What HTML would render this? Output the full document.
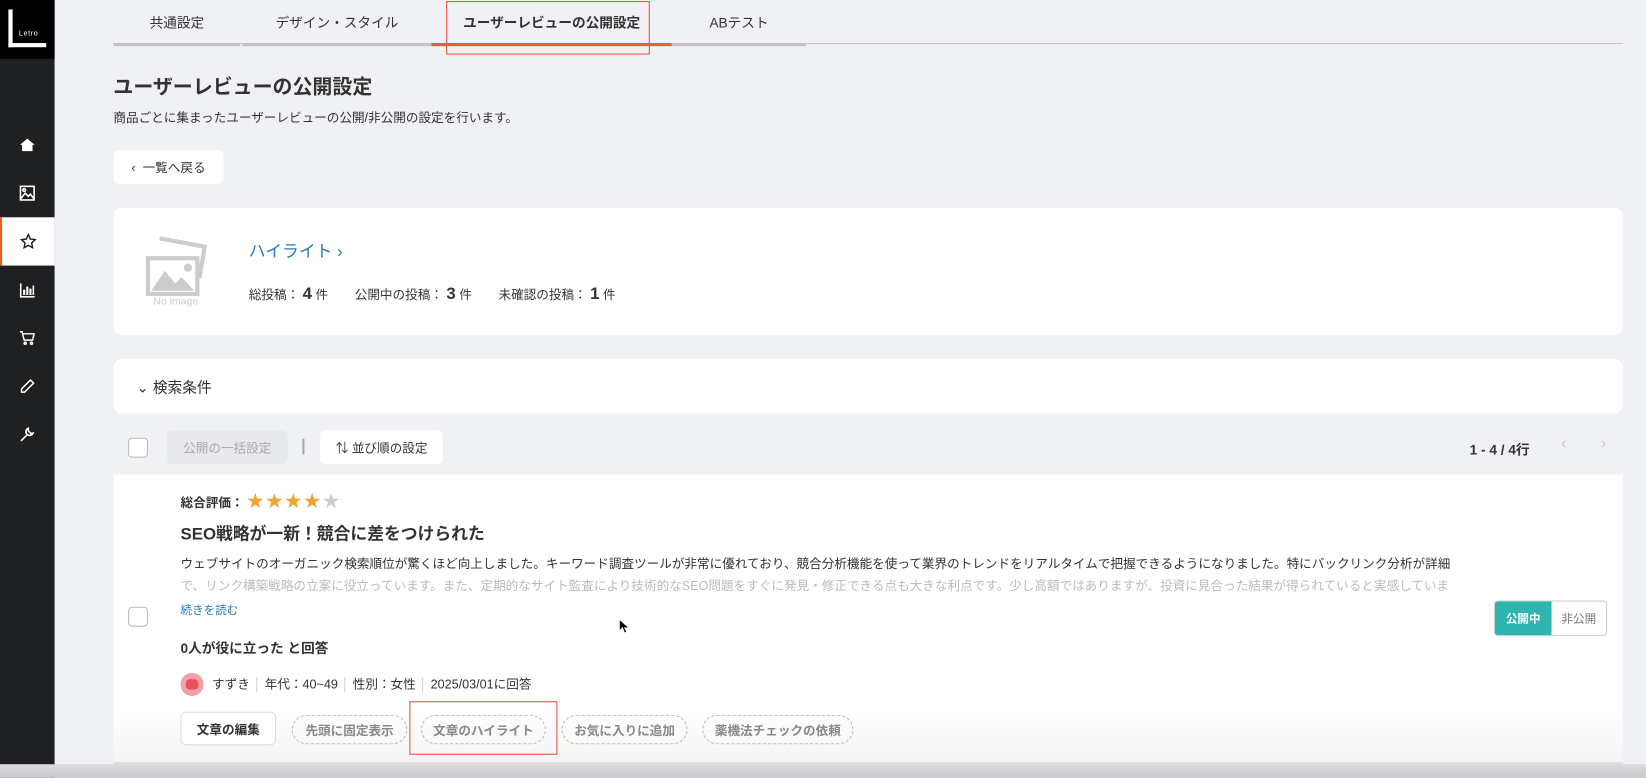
<!DOCTYPE html>
<html><head><meta charset="utf-8"><style>
*{box-sizing:border-box;margin:0;padding:0}
html,body{width:1646px;height:778px;overflow:hidden;background:#f0f1f4}
#w{position:absolute;left:0;top:0;width:1568px;height:741px;transform:scale(1.04974);transform-origin:0 0;font-family:"Liberation Sans","Noto Sans CJK JP",sans-serif;color:#333}
.sb{position:absolute;left:0;top:0;width:52px;height:741px;background:#1f2022}
.logo{position:absolute;left:0;top:0;width:52px;height:56px;background:#000}
.ic{position:absolute;left:0;width:52px;height:46px;display:flex;align-items:center;justify-content:center}
.abs{position:absolute}
.tab{position:absolute;top:0;height:44px;font-size:13px;display:flex;align-items:center;justify-content:center;border-bottom:3px solid #c4c4c6;color:#333}
.card{position:absolute;background:#fff;border-radius:8px}
.btn{position:absolute;background:#fff;border-radius:5px;font-size:12px;display:flex;align-items:center;justify-content:center}
.pill{position:absolute;top:681px;height:28px;border:1px dashed #bbb;border-radius:14px;font-size:12px;color:#888;display:flex;align-items:center;justify-content:center;font-weight:bold}
.star{color:#f0a232;font-size:16px;letter-spacing:2px}
</style></head><body><div id="w">
<div class="sb">
<div class="logo"><div class="abs" style="left:8px;top:9px;width:4px;height:36px;background:#fff"></div><div class="abs" style="left:8px;top:41px;width:36px;height:4px;background:#fff"></div><div class="abs" style="left:18px;top:29px;color:#fff;font-size:7px;letter-spacing:.5px">Letro</div></div>
<div class="ic" style="top:115px"><svg width="16" height="16" viewBox="0 0 16 16"><path d="M1 8L8 2l7 6h-2v6H3V8z" fill="#fff"/></svg></div>
<div class="ic" style="top:161px"><svg width="16" height="16" viewBox="0 0 16 16" fill="none" stroke="#fff" stroke-width="1.5"><rect x="1.5" y="1.5" width="13" height="13"/><path d="M2 13l4-5 3 3 2-2 3 4"/><circle cx="5" cy="5" r="1.3"/></svg></div>
<div class="ic" style="top:207px;background:#fff;border-left:2px solid #e8631c"><svg width="16" height="16" viewBox="0 0 16 16" fill="none" stroke="#222" stroke-width="1.4"><path d="M8 1.5l2 4.2 4.5.6-3.3 3.1.8 4.5L8 11.7l-4 2.2.8-4.5L1.5 6.3 6 5.7z"/></svg></div>
<div class="ic" style="top:253px"><svg width="16" height="16" viewBox="0 0 16 16" fill="#fff"><rect x="1" y="14" width="14" height="1.5"/><rect x="1" y="2" width="1.5" height="13"/><rect x="4" y="8" width="2" height="5"/><rect x="7" y="5" width="2" height="8"/><rect x="10" y="7" width="2" height="6"/><rect x="13" y="4" width="1.5" height="9"/></svg></div>
<div class="ic" style="top:299px"><svg width="16" height="16" viewBox="0 0 16 16" fill="none" stroke="#fff" stroke-width="1.4"><path d="M1 2h2l2 8h8l1.5-6H4"/><circle cx="6" cy="13" r="1"/><circle cx="12" cy="13" r="1"/></svg></div>
<div class="ic" style="top:345px"><svg width="16" height="16" viewBox="0 0 16 16" fill="none" stroke="#fff" stroke-width="1.4"><path d="M11 2l3 3-8.5 8.5H2.5v-3z"/></svg></div>
<div class="ic" style="top:391px"><svg width="16" height="16" viewBox="0 0 16 16" fill="none" stroke="#fff" stroke-width="1.5"><path d="M2 14l6-6M9 2a3.5 3.5 0 104.5 4.5L11.5 7 9 4.5z"/></svg></div>
</div>

<div class="abs" style="left:108px;top:41px;width:1438px;height:1px;background:#c4c4c6"></div>
<div class="tab" style="left:108px;width:121px">共通設定</div>
<div class="tab" style="left:231px;width:180px">デザイン・スタイル</div>
<div class="tab" style="left:411px;width:229px;border-bottom-color:#e8631c;font-weight:bold">ユーザーレビューの公開設定</div>
<div class="tab" style="left:640px;width:128px">ABテスト</div>
<div class="abs" style="left:425px;top:1px;width:194px;height:51px;border:1px solid #e8503a"></div>

<div class="abs" style="left:108px;top:68px;font-size:19px;font-weight:bold">ユーザーレビューの公開設定</div>
<div class="abs" style="left:108px;top:103px;font-size:12px">商品ごとに集まったユーザーレビューの公開/非公開の設定を行います。</div>
<div class="btn" style="left:108px;top:143px;width:105px;height:32px">‹&nbsp; 一覧へ戻る</div>

<div class="card" style="left:108px;top:198px;width:1438px;height:121px">
<svg class="abs" style="left:30px;top:24px" width="62" height="72" viewBox="0 0 62 72"><path d="M14 5l43 8-5 30" fill="none" stroke="#ccc" stroke-width="4"/><rect x="3" y="24" width="47" height="34" fill="#fff" stroke="#ccc" stroke-width="4"/><path d="M6 55l13-19 10 12 6-6 12 13z" fill="#ccc"/><circle cx="41" cy="33" r="4" fill="#ccc"/><text x="8" y="68" font-size="10" fill="#ccc" font-family="Liberation Sans">No image</text></svg>
<div class="abs" style="left:129px;top:28px;color:#2a7ab8;font-size:16px">ハイライト ›</div>
<div class="abs" style="left:129px;top:74px;font-size:12px;white-space:nowrap">総投稿： <b style="font-size:16px">4</b> 件 <span style="margin-left:22px">公開中の投稿： <b style="font-size:16px">3</b> 件</span> <span style="margin-left:22px">未確認の投稿： <b style="font-size:16px">1</b> 件</span></div>
</div>

<div class="card" style="left:108px;top:342px;width:1438px;height:52px"><div class="abs" style="left:22px;top:17px;font-size:14px">⌄ 検索条件</div></div>

<div class="abs" style="left:122px;top:417px;width:19px;height:19px;border:1px solid #bbb;border-radius:4px;background:#fff"></div>
<div class="btn" style="left:159px;top:410px;width:115px;height:32px;background:#e8e9ec;color:#aaa">公開の一括設定</div>
<div class="abs" style="left:288px;top:418px;width:2px;height:15px;background:#aaa"></div>
<div class="btn" style="left:305px;top:410px;width:117px;height:32px">⇅ 並び順の設定</div>
<div class="abs" style="left:1400px;top:418px;font-size:13px;font-weight:bold">1 - 4 / 4行</div>
<div class="abs" style="left:1487px;top:414px;color:#ccc;font-size:16px">‹</div>
<div class="abs" style="left:1525px;top:414px;color:#ccc;font-size:16px">›</div>

<div class="abs" style="left:108px;top:452px;width:1438px;height:280px;background:linear-gradient(#fff 80%,#f2f2f3)"></div>
<div class="abs" style="left:108px;top:726px;width:1438px;height:2px;background:#ddd"></div>
<div class="abs" style="left:0;top:728px;width:1568px;height:13px;background:linear-gradient(#dcdcde,#c8c8ca)"></div>
<div class="abs" style="left:122px;top:578px;width:19px;height:19px;border:1px solid #bbb;border-radius:4px;background:#fff"></div>
<div class="abs" style="left:172px;top:464px;font-size:12px;font-weight:bold">総合評価： <span class="star">★★★★</span><span style="color:#ccc;font-size:16px">★</span></div>
<div class="abs" style="left:172px;top:495px;font-size:16px;font-weight:bold">SEO戦略が一新！競合に差をつけられた</div>
<div class="abs" style="left:172px;top:527px;font-size:12px;width:1210px;white-space:nowrap;overflow:hidden;line-height:21px">ウェブサイトのオーガニック検索順位が驚くほど向上しました。キーワード調査ツールが非常に優れており、競合分析機能を使って業界のトレンドをリアルタイムで把握できるようになりました。特にバックリンク分析が詳細<br><span style="color:#bbb">で、リンク構築戦略の立案に役立っています。また、定期的なサイト監査により技術的なSEO問題をすぐに発見・修正できる点も大きな利点です。少し高額ではありますが、投資に見合った結果が得られていると実感していま</span></div>
<div class="abs" style="left:172px;top:573px;font-size:11px;color:#2a7ab8">続きを読む</div>
<div class="abs" style="left:172px;top:607px;font-size:13px;font-weight:bold">0人が役に立った と回答</div>
<div class="abs" style="left:172px;top:641px;width:22px;height:22px;border-radius:50%;background:#f4a0a6"><div class="abs" style="left:5px;top:6px;width:12px;height:10px;border-radius:4px;background:#e5505c"></div></div>
<div class="abs" style="left:202px;top:643px;font-size:12px;white-space:nowrap">すずき <span style="color:#ccc">│</span> 年代：40~49 <span style="color:#ccc">│</span> 性別：女性 <span style="color:#ccc">│</span> 2025/03/01に回答</div>
<div class="btn" style="left:172px;top:678px;width:91px;height:32px;border:1px solid #ddd;font-weight:bold">文章の編集</div>
<div class="pill" style="left:278px;width:110px">先頭に固定表示</div>
<div class="pill" style="left:401px;width:119px">文章のハイライト</div>
<div class="pill" style="left:535px;width:120px">お気に入りに追加</div>
<div class="pill" style="left:669px;width:144px">薬機法チェックの依頼</div>
<div class="abs" style="left:390px;top:668px;width:141px;height:51px;border:1px solid #e8503a"></div>

<div class="abs" style="left:1423px;top:572px;width:108px;height:34px;border:1px solid #ccc;border-radius:4px;background:#fff;overflow:hidden;font-size:11px;display:flex"><div style="width:54px;background:#2fb5b0;color:#fff;font-weight:bold;display:flex;align-items:center;justify-content:center">公開中</div><div style="flex:1;color:#777;display:flex;align-items:center;justify-content:center">非公開</div></div>
<svg class="abs" style="left:589px;top:589px" width="10" height="15" viewBox="0 0 10 15"><path d="M1 1v11l3-3 2 5 2-1-2-4h4z" fill="#000" stroke="#fff" stroke-width=".8"/></svg>
</div></body></html>
